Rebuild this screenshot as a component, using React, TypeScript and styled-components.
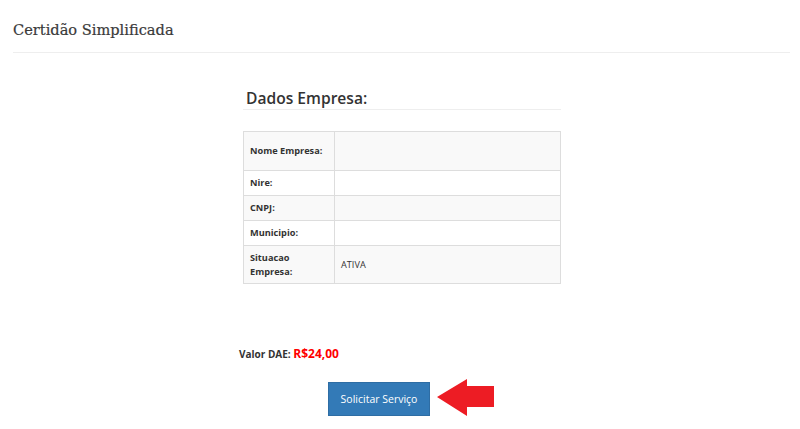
import React from "react";
import styled, { createGlobalStyle } from "styled-components";

const GlobalStyle = createGlobalStyle`
  html, body {
    margin: 0;
    padding: 0;
    background: #fff;
  }
  body {
    font-family: "Open Sans", "Liberation Sans", sans-serif;
    color: #333;
  }
`;

const Header = styled.div`
  margin: 0 10px 0 13px;
  padding-top: 20px;
  height: 32px;
  border-bottom: 1px solid #eee;
`;

const PageTitle = styled.h1`
  margin: 0;
  font-family: "DejaVu Serif", serif;
  font-weight: normal;
  font-size: 14.6px;
  line-height: 20px;
  color: #3a3a3a;
  -webkit-text-stroke: 0.2px #3a3a3a;
`;

const Content = styled.div`
  width: 318px;
  margin: 36px 0 0 243px;
`;

const SectionTitle = styled.h2`
  margin: 0;
  padding: 0 0 2px 3px;
  font-size: 15.6px;
  font-weight: 600;
  line-height: 18px;
  color: #333;
  border-bottom: 1px solid #eee;
`;

const Table = styled.table`
  width: 100%;
  margin-top: 21px;
  border-collapse: collapse;
  border: 1px solid #ddd;
  font-size: 9.2px;
`;

const Row = styled.tr<{ $striped: boolean; $h: number }>`
  height: ${(p) => p.$h}px;
  background: ${(p) => (p.$striped ? "#f9f9f9" : "#fff")};
`;

const Label = styled.th`
  width: 80px;
  padding: 0 4px 0 6px;
  border: 1px solid #ddd;
  text-align: left;
  font-weight: 700;
  line-height: 14px;
  color: #333;
`;

const Value = styled.td`
  padding: 0 6px;
  border: 1px solid #ddd;
  color: #333;
`;

const Price = styled.div`
  margin: 61px 0 0 239px;
  font-size: 10px;
  font-weight: 700;
  color: #333;
`;

const Amount = styled.span`
  font-size: 12px;
  color: #f00;
`;

const Actions = styled.div`
  position: relative;
  margin: 20px 0 0 328px;
  width: 102px;
`;

const Button = styled.button`
  display: block;
  width: 102px;
  height: 34px;
  padding: 0;
  border: 1px solid #2e6da4;
  background: #337ab7;
  color: #fff;
  font-family: "Open Sans", "Liberation Sans", sans-serif;
  font-size: 10.5px;
  cursor: pointer;
`;

const Arrow = styled.svg`
  position: absolute;
  left: 109px;
  top: -5px;
`;

const rows = [
  { label: "Nome Empresa:", value: "", h: 39 },
  { label: "Nire:", value: "", h: 25 },
  { label: "CNPJ:", value: "", h: 25 },
  { label: "Municipio:", value: "", h: 25 },
  { label: "Situacao Empresa:", value: "ATIVA", h: 38 },
];

export default function App() {
  return (
    <>
      <GlobalStyle />
      <Header>
        <PageTitle>Certidão Simplificada</PageTitle>
      </Header>
      <Content>
        <SectionTitle>Dados Empresa:</SectionTitle>
        <Table>
          <tbody>
            {rows.map((r, i) => (
              <Row key={r.label} $striped={i % 2 === 0} $h={r.h}>
                <Label>{r.label}</Label>
                <Value>{r.value}</Value>
              </Row>
            ))}
          </tbody>
        </Table>
      </Content>
      <Price>
        Valor DAE: <Amount>R$24,00</Amount>
      </Price>
      <Actions>
        <Button>Solicitar Serviço</Button>
        <Arrow width="58" height="42" viewBox="0 0 58 42">
          <polygon points="0,20 30,2 30,9 57,9 57,30 30,30 30,39" fill="#ed1c24" />
        </Arrow>
      </Actions>
    </>
  );
}
